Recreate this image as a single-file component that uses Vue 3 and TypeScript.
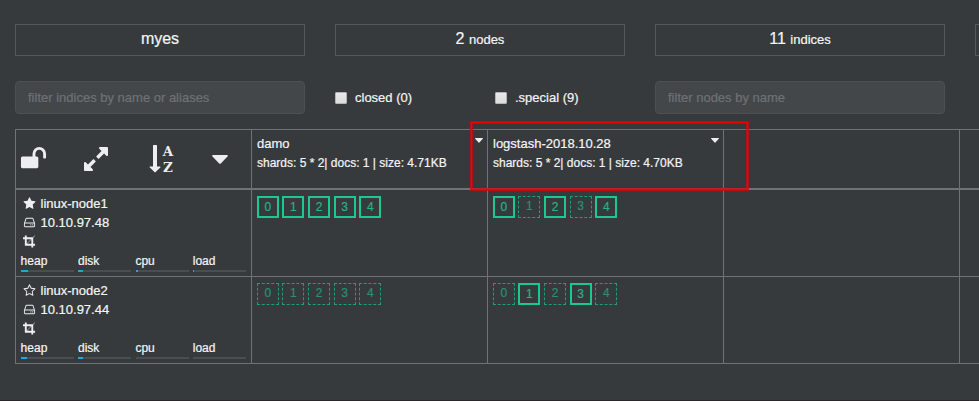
<script setup lang="ts">
interface Metric { label: string; used: number }
interface ClusterNode { name: string; ip: string; master: boolean; metrics: Metric[]; shards: boolean[][] }

const indices = [
  { name: 'damo', info: 'shards: 5 * 2| docs: 1 | size: 4.71KB' },
  { name: 'logstash-2018.10.28', info: 'shards: 5 * 2| docs: 1 | size: 4.70KB' },
]

const metrics = (heap: number, disk: number, cpu: number, load: number): Metric[] => [
  { label: 'heap', used: heap },
  { label: 'disk', used: disk },
  { label: 'cpu', used: cpu },
  { label: 'load', used: load },
]

const nodes: ClusterNode[] = [
  {
    name: 'linux-node1', ip: '10.10.97.48', master: true, metrics: metrics(13, 8, 4, 2),
    shards: [[true, true, true, true, true], [true, false, true, false, true]],
  },
  {
    name: 'linux-node2', ip: '10.10.97.44', master: false, metrics: metrics(11, 8, 0, 0),
    shards: [[false, false, false, false, false], [false, true, false, true, false]],
  },
]

const icons = {
  unlock: 'M1728 576v256q0 26-19 45t-45 19h-64q-26 0-45-19t-19-45v-256q0-106-75-181t-181-75-181 75-75 181v192h96q40 0 68 28t28 68v576q0 40-28 68t-68 28h-960q-40 0-68-28t-28-68v-576q0-40 28-68t68-28h672v-192q0-185 131.5-316.5t316.5-131.5 316.5 131.5 131.5 316.5z',
  expand: 'M883 1056q0 13-10 23l-332 332 144 144q19 19 19 45t-19 45-45 19h-448q-26 0-45-19t-19-45v-448q0-26 19-45t45-19 45 19l144 144 332-332q10-10 23-10t23 10l114 114q10 10 10 23zm781-864v448q0 26-19 45t-45 19-45-19l-144-144-332 332q-10 10-23 10t-23-10l-114-114q-10-10-10-23t10-23l332-332-144-144q-19-19-19-45t19-45 45-19h448q26 0 45 19t19 45z',
  arrow: 'M736 1408q0 12-10 24l-319 319q-10 9-23 9-12 0-23-9l-320-320q-15-16-7-35 8-20 30-20h192v-1344q0-14 9-23t23-9h192q14 0 23 9t9 23v1344h192q14 0 23 9t9 23z',
  star: 'M1728 647q0 22-26 48l-363 354 86 500q1 7 1 20 0 21-10.5 35.5t-30.5 14.5q-19 0-40-12l-449-236-449 236q-22 12-40 12-21 0-31.5-14.5t-10.5-35.5q0-6 2-20l86-500-364-354q-25-27-25-48 0-37 56-46l502-73 225-455q19-41 49-41t49 41l225 455 502 73q56 9 56 46z',
  starOutline: 'M1201 1004l306-297-422-62-189-382-189 382-422 62 306 297-73 421 378-199 377 199zm527-357q0 22-26 48l-363 354 86 500q1 7 1 20 0 50-41 50-19 0-40-12l-449-236-449 236q-22 12-40 12-21 0-31.5-14.5t-10.5-35.5q0-6 2-20l86-500-364-354q-25-27-25-48 0-37 56-46l502-73 225-455q19-41 49-41t49 41l225 455 502 73q56 9 56 46z',
  drive: 'M1168 1216q0 33-23.5 56.5t-56.5 23.5-56.5-23.5-23.5-56.5 23.5-56.5 56.5-23.5 56.5 23.5 23.5 56.5zm256 0q0 33-23.5 56.5t-56.5 23.5-56.5-23.5-23.5-56.5 23.5-56.5 56.5-23.5 56.5 23.5 23.5 56.5zm112 160v-320q0-13-9.5-22.5t-22.5-9.5h-1216q-13 0-22.5 9.5t-9.5 22.5v320q0 13 9.5 22.5t22.5 9.5h1216q13 0 22.5-9.5t9.5-22.5zm-1230-480h1180l-157-482q-4-13-16-21.5t-26-8.5h-782q-14 0-26 8.5t-16 21.5zm1358 160v320q0 66-47 113t-113 47h-1216q-66 0-113-47t-47-113v-320q0-25 16-75l197-606q17-53 63-86t101-33h782q55 0 101 33t63 86l197 606q16 50 16 75z',
  crop: 'M557 1216h595v-595zm-45-45l595-595h-595v595zm1152 77v192q0 14-9 23t-23 9h-224v224q0 14-9 23t-23 9h-192q-14 0-23-9t-9-23v-224h-864q-14 0-23-9t-9-23v-864h-224q-14 0-23-9t-9-23v-192q0-14 9-23t23-9h224v-224q0-14 9-23t23-9h192q14 0 23 9t9 23v224h851l246-247q10-9 23-9t23 9q9 10 9 23t-9 23l-247 246v851h224q14 0 23 9t9 23z',
}
</script>

<template>
  <main class="page">
    <section class="stats">
      <div class="stat">myes</div>
      <div class="stat">2 <small>nodes</small></div>
      <div class="stat">11 <small>indices</small></div>
      <div class="stat"></div>
    </section>

    <section class="filters">
      <input class="field" type="text" placeholder="filter indices by name or aliases" />
      <div class="checks">
        <label class="check"><span class="box"></span>closed (0)</label>
        <label class="check"><span class="box"></span>.special (9)</label>
      </div>
      <input class="field" type="text" placeholder="filter nodes by name" />
    </section>

    <section class="table">
      <div class="row head">
        <div class="cell tools">
          <svg class="unlock" viewBox="0 0 1792 1792"><path :d="icons.unlock" /></svg>
          <svg class="tool" viewBox="0 0 1792 1792"><path :d="icons.expand" /></svg>
          <svg class="tool" viewBox="0 0 1792 1792">
            <path :d="icons.arrow" />
            <text class="letter" x="1215" y="730" text-anchor="middle">A</text>
            <text class="letter" x="1215" y="1740" text-anchor="middle">Z</text>
          </svg>
          <svg class="caret-large" viewBox="0 0 16 9"><path d="M1 0H15Q16.4 .2 15.5 1.4L8.8 8.5Q8 9.2 7.2 8.5L.5 1.4Q-.4 .2 1 0Z" /></svg>
        </div>
        <div v-for="index in indices" :key="index.name" class="cell index">
          <div class="index-text">
            <div class="index-name">{{ index.name }}</div>
            <div class="index-info">{{ index.info }}</div>
          </div>
          <svg class="caret-small" viewBox="0 0 8 5"><path d="M.5 0H7.5Q8.2 .1 7.8 .8L4.4 4.6Q4 5 3.6 4.6L.2 .8Q-.2 .1 .5 0Z" /></svg>
        </div>
        <div class="cell"></div>
        <div class="cell"></div>
      </div>

      <div v-for="node in nodes" :key="node.name" class="row">
        <div class="cell node">
          <div class="line">
            <svg class="icon" viewBox="0 0 1792 1792"><path :d="node.master ? icons.star : icons.starOutline" /></svg>{{ node.name }}
          </div>
          <div class="line">
            <svg class="icon" viewBox="0 0 1792 1792"><path :d="icons.drive" /></svg>{{ node.ip }}
          </div>
          <div class="line">
            <svg class="icon" viewBox="0 0 1792 1792"><path :d="icons.crop" /></svg>
          </div>
          <div class="metrics">
            <div v-for="metric in node.metrics" :key="metric.label" class="metric">
              <div class="metric-label">{{ metric.label }}</div>
              <div class="bar"><div class="used" :style="{ width: metric.used + '%' }"></div></div>
            </div>
          </div>
        </div>
        <div v-for="(group, g) in node.shards" :key="g" class="cell shards">
          <span v-for="(primary, s) in group" :key="s" class="shard" :class="{ primary }">{{ s }}</span>
        </div>
        <div class="cell"></div>
        <div class="cell"></div>
      </div>
    </section>

    <div class="highlight"></div>
  </main>
</template>

<style>
body {
  background: #373a3c;
}
</style>

<style scoped>
.page {
  position: relative;
  box-sizing: border-box;
  width: 979px;
  height: 401px;
  padding: 24px 0 0 15px;
  overflow: hidden;
  border-bottom: 1px solid #2b2729;
  background: #373a3c;
  color: #f4f5f5;
  font: 13px/19px "Liberation Sans", Arial, sans-serif;
  -webkit-text-stroke: 0.2px currentColor;
}
svg {
  display: block;
  fill: #eceeef;
  -webkit-text-stroke: 0;
}
.stats,
.filters {
  display: grid;
  grid-template-columns: repeat(4, 290px);
  column-gap: 30px;
}
.stat {
  box-sizing: border-box;
  height: 32px;
  border: 1px solid #55595c;
  font-size: 16px;
  line-height: 27px;
  text-align: center;
}
.stat small {
  font-size: 13px;
}
.filters {
  margin-top: 25px;
}
.field {
  box-sizing: border-box;
  width: 290px;
  height: 33px;
  margin: 0;
  padding: 0 12px;
  border: 1px solid #4d5052;
  border-radius: 4px;
  background: #444749;
  color: #eceeef;
  font: 13px "Liberation Sans", Arial, sans-serif;
}
.field::placeholder {
  color: #6d7276;
  opacity: 1;
}
.checks {
  display: grid;
  grid-template-columns: 160px 1fr;
}
.check {
  display: flex;
  align-items: center;
  gap: 8px;
}
.box {
  box-sizing: border-box;
  width: 12px;
  height: 12px;
  border: 1px solid #b4b4b4;
  border-radius: 1px;
  background: linear-gradient(#e8e8e8, #dcdcdc);
}
.table {
  width: 1180px;
  margin-top: 15px;
  border-top: 1px solid #6f7376;
  border-left: 1px solid #6f7376;
}
.row {
  display: grid;
  grid-template-columns: repeat(5, 236px);
  height: 87px;
}
.head {
  height: 60px;
}
.cell {
  box-sizing: border-box;
  border-right: 1px solid #6f7376;
  border-bottom: 1px solid #6f7376;
}
.head .cell {
  border-bottom-width: 2px;
}
.tools {
  display: grid;
  grid-template-columns: 62.5px 66.5px 63.5px 16px;
  align-items: center;
  padding-left: 3.5px;
}
.unlock {
  width: 27px;
  height: 27px;
  margin-top: -2px;
}
.tool {
  width: 28px;
  height: 28px;
  overflow: visible;
}
.letter {
  font: bold 860px "DejaVu Serif", serif;
}
.caret-large {
  width: 16px;
  height: 9px;
}
.index {
  display: flex;
  justify-content: space-between;
  padding: 4px 4.5px 0 5px;
}
.index-info {
  font-size: 12px;
  line-height: 20px;
  white-space: nowrap;
}
.caret-small {
  width: 8px;
  height: 5px;
  margin-top: 4px;
}
.node {
  padding: 4px 5px 0;
}
.line {
  display: flex;
  align-items: center;
  height: 19px;
  padding-left: 1.5px;
  gap: 5px;
}
.icon {
  width: 13px;
  height: 13px;
}
.metrics {
  display: grid;
  grid-template-columns: repeat(4, 53px);
  column-gap: 4.4px;
  font-size: 12px;
  line-height: 21px;
}
.metric-label {
  height: 19px;
  margin-left: -0.4px;
}
.bar {
  height: 2px;
  background: #4b4e50;
}
.used {
  height: 2px;
  background: #1ca8dd;
}
.shards {
  display: flex;
  gap: 3.6px;
  padding: 6px 0 0 4.85px;
}
.shard {
  box-sizing: border-box;
  width: 22px;
  height: 22px;
  border: 1px dashed #1f9d74;
  color: #299070;
  font-size: 12px;
  line-height: 19px;
  text-align: center;
}
.primary {
  border: 2px solid #1bc98e;
  color: #25b580;
}
.highlight {
  position: absolute;
  top: 122px;
  left: 471px;
  box-sizing: border-box;
  width: 277px;
  height: 68px;
  border: 1px solid #f80000;
  box-shadow: 0 0 0 1px rgba(225, 0, 0, 0.7), inset 0 0 0 1px rgba(225, 0, 0, 0.7);
}
</style>
